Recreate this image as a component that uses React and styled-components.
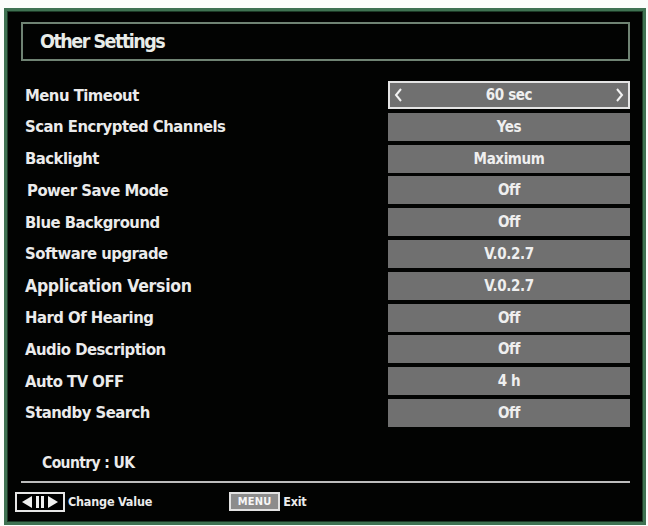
import styled, { createGlobalStyle } from 'styled-components';

const GlobalStyle = createGlobalStyle`
  html, body {
    margin: 0;
    padding: 0;
    background: #fbfdfb;
  }
  * {
    box-sizing: border-box;
  }
`;

const font = `"DejaVu Sans Condensed", "Liberation Sans Narrow", "Liberation Sans", sans-serif`;

const Frame = styled.div`
  margin: 8px 0 0 4px;
  width: 642px;
  height: 517px;
  background: #020302;
  border: 3px solid #3f7252;
  box-shadow: inset 0 0 0 1px #1c3a26;
  padding: 11px 13px 0 8px;
  font-family: ${font};
  font-weight: bold;
  color: #ebebeb;
  display: flex;
  flex-direction: column;
`;

const Body = styled.div`
  padding-left: 6px;
  display: flex;
  flex-direction: column;
`;

const TitleBox = styled.div`
  height: 39px;
  border: 2px solid #6f8373;
  display: flex;
  align-items: center;
  padding-left: 17px;
  font-size: 19.5px;
  letter-spacing: -1.5px;
  color: #e8ece8;
`;

const List = styled.div`
  margin-top: 20px;
  display: grid;
  grid-template-columns: 1fr 242px;
  grid-auto-rows: 28px;
  row-gap: 3.8px;
`;

const Label = styled.div`
  display: flex;
  align-items: center;
  padding-left: ${p => (p.$indent ? 6 : 4)}px;
  font-size: ${p => (p.$wide ? 17.5 : 16.5)}px;
  letter-spacing: ${p => (p.$wide ? -0.3 : -0.5)}px;
  white-space: nowrap;
`;

const Value = styled.div`
  position: relative;
  display: flex;
  align-items: center;
  justify-content: center;
  background: #707070;
  font-size: 15px;
  letter-spacing: -0.4px;
  color: #efefef;
  border: ${p => (p.$active ? '2px solid #e4e4e4' : 'none')};
`;

const Arrow = styled.svg`
  position: absolute;
  top: 50%;
  transform: translateY(-50%);
  ${p => (p.$side === 'left' ? 'left: 4px;' : 'right: 4px;')}
`;

const Country = styled.div`
  margin-top: 24px;
  height: 24px;
  display: flex;
  align-items: center;
  padding-left: 21px;
  font-size: 15.5px;
  letter-spacing: -0.6px;
`;

const Divider = styled.div`
  margin-top: 6px;
  height: 2px;
  background: #bdbdbd;
`;

const Footer = styled.div`
  margin-top: 9px;
  display: flex;
  align-items: center;
  font-size: 12.5px;
  letter-spacing: -0.2px;
`;

const Hint = styled.div`
  display: flex;
  align-items: center;
  gap: 3px;
  margin-right: ${p => p.$gap || 0}px;
`;

const MenuKey = styled.span`
  width: 51px;
  height: 19px;
  border: 2px solid #e2e2e2;
  background: #8c8c8c;
  color: #f7f7f7;
  font-size: 11px;
  display: flex;
  align-items: center;
  justify-content: center;
  letter-spacing: 0.2px;
`;

const rows = [
  { label: 'Menu Timeout', value: '60 sec' },
  { label: 'Scan Encrypted Channels', value: 'Yes' },
  { label: 'Backlight', value: 'Maximum' },
  { label: 'Power Save Mode', value: 'Off', indent: true },
  { label: 'Blue Background', value: 'Off' },
  { label: 'Software upgrade', value: 'V.0.2.7' },
  { label: 'Application Version', value: 'V.0.2.7', wide: true },
  { label: 'Hard Of Hearing', value: 'Off' },
  { label: 'Audio Description', value: 'Off' },
  { label: 'Auto TV OFF', value: '4 h' },
  { label: 'Standby Search', value: 'Off' },
];

function ArrowKeys() {
  return (
    <svg width="50" height="20" viewBox="0 0 50 20">
      <rect x="1" y="1" width="48" height="18" fill="#000" stroke="#e6e6e6" strokeWidth="2" />
      <polygon points="7,10 17,4 17,16" fill="#f0f0f0" />
      <rect x="21" y="4" width="3" height="12" fill="#f0f0f0" />
      <rect x="26" y="4" width="3" height="12" fill="#f0f0f0" />
      <polygon points="43,10 33,4 33,16" fill="#f0f0f0" />
    </svg>
  );
}

function Chevron({ side }) {
  const pts = side === 'left' ? '7,1 2,7 7,13' : '2,1 7,7 2,13';
  return (
    <Arrow $side={side} width="9" height="14" viewBox="0 0 9 14">
      <polyline points={pts} fill="none" stroke="#f2f2f2" strokeWidth="2" />
    </Arrow>
  );
}

export default function App() {
  return (
    <>
      <GlobalStyle />
      <Frame>
        <Body>
          <TitleBox>Other Settings</TitleBox>
          <List>
            {rows.map((row, i) => [
              <Label key={'l' + i} $indent={row.indent} $wide={row.wide}>{row.label}</Label>,
              <Value key={'v' + i} $active={i === 0}>
                {i === 0 && <Chevron side="left" />}
                {row.value}
                {i === 0 && <Chevron side="right" />}
              </Value>,
            ])}
          </List>
          <Country>Country : UK</Country>
          <Divider />
        </Body>
        <Footer>
          <Hint $gap={77}>
            <ArrowKeys />
            <span>Change Value</span>
          </Hint>
          <Hint>
            <MenuKey>MENU</MenuKey>
            <span>Exit</span>
          </Hint>
        </Footer>
      </Frame>
    </>
  );
}
